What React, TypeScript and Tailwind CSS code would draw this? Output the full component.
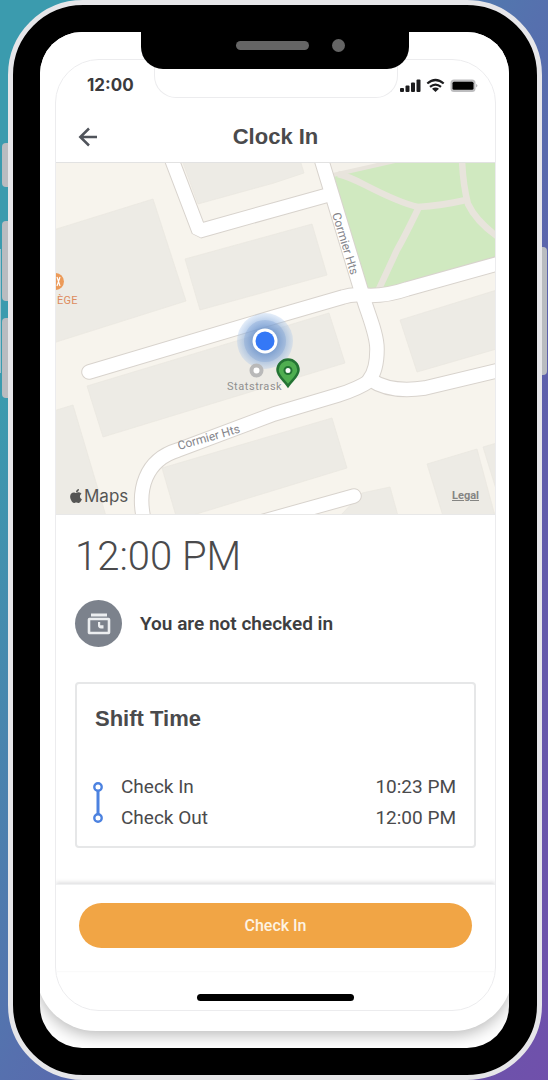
import React from "react";
import { FaApple } from "react-icons/fa";

const shifts = [
  { label: "Check In", time: "10:23 PM" },
  { label: "Check Out", time: "12:00 PM" },
];

const roads = [
  "M170 155 L199 231 L274 210 L328 195",
  "M320 155 L361 290 C366 310 377 332 377 349 C377 364 374 374 369 380",
  "M89 372 L274 317 L343 297 Q352 294 362 295 Q384 297 407 289 L500 263",
  "M144 520 C137 490 145 460 178 450 L274 414 L338 395 Q358 389 371 380 Q390 393 425 388 L500 370",
  "M354 496 L250 525",
];

const buildings = [
  "50,231 153,199 186,301 50,344",
  "182,160 300,160 304,173 274,183 198,204",
  "185,259 312,224 327,275 200,310",
  "87,386 329,313 345,363 103,437",
  "50,412 73,405 106,516 50,516",
  "162,468 332,418 347,468 190,516 176,516",
  "400,320 500,289 500,348 417,372",
  "427,464 477,449 495,516 443,516",
  "483,447 500,442 500,502",
  "362,493 390,487 398,516 340,516",
];

function MapView() {
  return (
    <section aria-label="Map" className="relative">
      <svg
        viewBox="56 163 439 351"
        className="block w-full bg-[#f7f4ed] font-['Roboto',sans-serif]"
      >
        <defs>
          <radialGradient id="halo">
            <stop offset="0.45" stopColor="#6f96cc" stopOpacity="0.8" />
            <stop offset="0.8" stopColor="#8fb2e0" stopOpacity="0.5" />
            <stop offset="1" stopColor="#a5c3ea" stopOpacity="0.3" />
          </radialGradient>
        </defs>
        <g fill="#edebe5" stroke="#e9e6df" strokeWidth="0.7">
          {buildings.map((points) => (
            <polygon key={points} points={points} />
          ))}
        </g>
        <polygon
          points="334,176 400,160 500,160 500,256 407,283 378,290 366,290"
          fill="#d0e9c0"
        />
        <polygon points="330,160 394,160 334,175" fill="#f4f1ea" />
        <g fill="none" stroke="#e8e4dc" strokeWidth="6.5">
          <path d="M333 175 L404 159" strokeWidth="4" />
          <path d="M338 174 Q350 177 365 185 Q400 203 418 207 Q440 206 466 200" />
          <path d="M419 207 Q405 236 397 250 L378 291" />
          <path d="M462 160 Q463 185 468 204 Q476 221 498 237" />
        </g>
        <g fill="none" strokeLinecap="round" strokeLinejoin="bevel">
          <g stroke="#d8d3cd" strokeWidth="15.5">
            {roads.map((d) => (
              <path key={d} d={d} />
            ))}
          </g>
          <g stroke="#ffffff" strokeWidth="13.5">
            {roads.map((d) => (
              <path key={d} d={d} />
            ))}
          </g>
        </g>
        <g fill="#85858b" fontSize="12">
          <text transform="translate(332 214) rotate(73)">Cormier Hts</text>
          <text transform="translate(179 450) rotate(-16)">Cormier Hts</text>
        </g>
        <circle cx="55.5" cy="281.5" r="8.5" fill="#ec9a58" />
        <path d="M57 277 L60 286 M60 277 L57 286" stroke="#fff" strokeWidth="1.2" />
        <text x="57" y="304" fontSize="11" fill="#dd8c5e" className="tracking-wide">
          ÈGE
        </text>
        <circle cx="265" cy="341" r="28" fill="url(#halo)" />
        <circle cx="265" cy="341" r="21" fill="#6b94cf" opacity="0.25" />
        <circle cx="265" cy="341" r="12.5" fill="#fff" />
        <circle cx="265" cy="341" r="9.5" fill="#3478f6" />
        <circle cx="256.5" cy="370.5" r="5" fill="#fff" stroke="#b9b9b9" strokeWidth="4" />
        <text x="227" y="390" fontSize="11" fill="#909090" className="tracking-wider">
          Statstrask
        </text>
        <path
          d="M288 386 C284 380 277.5 376 277.5 370 A10.5 10.5 0 0 1 298.5 370 C298.5 376 292 380 288 386 Z"
          fill="#4fae50"
          stroke="#247334"
          strokeWidth="2.5"
        />
        <circle cx="288" cy="370.5" r="3.5" fill="#fff" stroke="#247334" strokeWidth="2" />
      </svg>
      <div className="absolute inset-x-0 bottom-0 flex items-center justify-between pr-4 pb-1.5 pl-3 text-[#555554]">
        <span className="flex items-center">
          <FaApple className="size-4" aria-hidden="true" />
          <span className="font-['Inter',sans-serif] text-[17px] leading-6">Maps</span>
        </span>
        <a href="#legal" className="text-[11px] font-bold text-[#858583] underline">
          Legal
        </a>
      </div>
    </section>
  );
}

function StatusBar() {
  return (
    <div className="flex h-[52px] items-center justify-between pr-4 pl-[31px]">
      <span className="font-['Inter',sans-serif] text-[17px] font-bold text-[#3b3b3d]">12:00</span>
      <svg viewBox="0 0 80 16" className="h-4 w-20" aria-hidden="true">
        <g fill="#1c1c1e">
          <rect x="1" y="10" width="4" height="4" rx="1" />
          <rect x="6.5" y="7.5" width="4" height="6.5" rx="1" />
          <rect x="12" y="4.5" width="4" height="9.5" rx="1" />
          <rect x="17.5" y="1.5" width="4" height="12.5" rx="1" />
          <path d="M36.5 14 L33 10.7 Q36.500 8.3 40 10.7 Z" />
        </g>
        <g fill="none" stroke="#1c1c1e" strokeWidth="2.2">
          <path d="M28.3 5.5 Q36.5 -1.5 44.7 5.5" />
          <path d="M31 8.8 Q36.5 4.3 42 8.8" />
        </g>
        <rect x="51.5" y="1.5" width="25" height="12.5" rx="3.500" fill="#bdbdbf" />
        <rect x="53.5" y="3.7" width="21" height="8" rx="1.500" fill="#000" />
        <path d="M77 6 Q80 7.700 77 9.500 Z" fill="#bdbdbf" />
      </svg>
    </div>
  );
}

export default function App() {
  return (
    <div className="relative flex min-h-screen overflow-hidden bg-[linear-gradient(to_bottom_right,#3b9bae_18%,#5670ae_50%,#5f5eab_70%,#7050ab_100%)] pr-1.5 pl-2 font-['Roboto',sans-serif] text-[#4a4a4c]">
      <div className="absolute top-[143px] left-0.5 h-11 w-2 rounded-l bg-[#b9bcc0]" />
      <div className="absolute top-[221px] left-0.5 h-20 w-2 rounded-l bg-[#b9bcc0]" />
      <div className="absolute top-[318px] left-0.5 h-20 w-2 rounded-l bg-[#b9bcc0]" />
      <div className="absolute top-[249px] left-0 h-[124px] w-px bg-[#9fc3cd]" />
      <div className="absolute top-[247px] right-px h-32 w-2 rounded-r bg-[#b9bcc0]" />

      <div className="relative flex flex-1 rounded-[75px] border-[5px] border-[#e6e6e9] bg-black pt-[27px] pr-7 pb-[27px] pl-[27px]">
        <div className="absolute inset-x-0 top-0 z-10 flex justify-center">
          <div className="flex h-16 w-[268px] items-center justify-center gap-[23px] rounded-b-[22px] bg-black pl-[30px]">
            <span className="mt-4 h-[9px] w-[73px] rounded-full bg-[#656565]" />
            <span className="mt-4 size-[13px] rounded-full bg-[#656565]" />
          </div>
        </div>

        <div className="flex-1 overflow-hidden rounded-[42px] bg-white">
          <div className="-mx-1 rounded-b-[60px] bg-white pt-[27px] pr-[17px] pb-5 pl-[19px] shadow-[0_4px_16px_rgba(0,0,0,0.28)]">
            <main className="relative overflow-hidden rounded-[44px] border border-[#ececee]">
              <div className="absolute inset-x-0 top-0 flex justify-center">
                <div className="h-[38px] w-[244px] rounded-b-[22px] border border-t-0 border-[#ececee]" />
              </div>
              <StatusBar />
              <header className="grid h-[51px] grid-cols-[48px_1fr_48px] items-center border-b border-[#e2e2e2] px-2">
                <button type="button" aria-label="Back" className="flex justify-center">
                  <svg viewBox="0 0 20 20" className="size-5" fill="none" stroke="#50545b" strokeWidth="2.5" aria-hidden="true">
                    <path d="M19 10 H2 M11 1.5 L2.3 10 L11 18.5" />
                  </svg>
                </button>
                <h1 className="text-center font-['Liberation_Sans',sans-serif] text-[22px] leading-6 font-bold">
                  Clock In
                </h1>
              </header>

              <MapView />

              <div className="border-t border-[#e8e8e8] px-[19px] pt-[17px]">
                <p className="text-[40px] leading-[50px] font-light">12:00 PM</p>
                <div className="mt-[18px] flex items-center gap-[18px]">
                  <span className="flex size-[47px] items-center justify-center rounded-full bg-[#7c828c]">
                    <svg viewBox="0 0 24 24" className="size-6" aria-hidden="true">
                      <path d="M4 3 H20" stroke="#eceef0" strokeWidth="3" />
                      <rect x="2" y="7" width="20" height="14" rx="0.5" fill="none" stroke="#eceef0" strokeWidth="2.6" />
                      <path d="M11 10 H13.2 V13.2 H16.5 V16.5 H14 Q11 16 11 13.500 Z" fill="#eceef0" />
                    </svg>
                  </span>
                  <p className="text-[19px] leading-7 font-semibold text-[#3e3e40]">
                    You are not checked in
                  </p>
                </div>

                <section className="mt-[35px] rounded border-2 border-[#e6e7e8] px-[18px] pt-[19px] pb-[13px]">
                  <h2 className="font-['Liberation_Sans',sans-serif] text-[22px] leading-8 font-bold">
                    Shift Time
                  </h2>
                  <div className="mt-9 flex gap-[18px]">
                    <svg viewBox="0 0 10 62" className="-ml-0.5 h-[62px] w-2.5" fill="none" stroke="#4c82e0" strokeWidth="2.4" aria-hidden="true">
                      <path d="M5 20 V43" strokeWidth="3" />
                      <circle cx="5" cy="16" r="3.7" />
                      <circle cx="5" cy="47" r="3.7" />
                    </svg>
                    <dl className="flex-1">
                      {shifts.map((shift) => (
                        <div key={shift.label} className="flex justify-between text-[19px] leading-[31px]">
                          <dt>{shift.label}</dt>
                          <dd>{shift.time}</dd>
                        </div>
                      ))}
                    </dl>
                  </div>
                </section>
              </div>

              <div className="mt-9 border-t border-[#f0f1f2] px-[23px] pt-[18px] pb-[23px] shadow-[0_-2px_4px_rgba(60,64,67,0.16)]">
                <button
                  type="button"
                  className="h-[45px] w-full rounded-full bg-[#f1a545] text-base font-medium text-[#fdf3e3]"
                >
                  Check In
                </button>
              </div>
              <div className="flex h-[39px] justify-center border-t border-[#fafafa] pt-[22px]">
                <span className="h-[7px] w-[157px] rounded-full bg-black" />
              </div>
            </main>
          </div>
        </div>
      </div>
    </div>
  );
}
